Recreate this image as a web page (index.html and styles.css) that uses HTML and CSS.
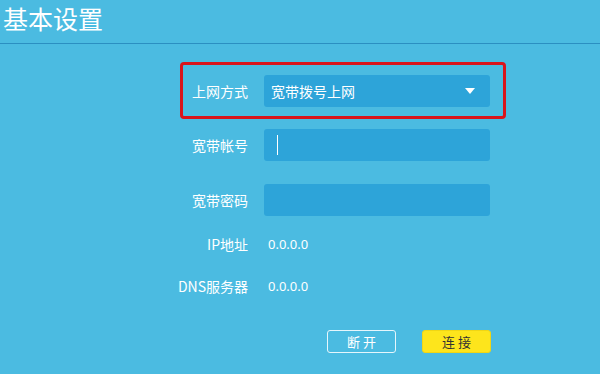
FILE: index.html
```html
<!DOCTYPE html>
<html lang="zh">
<head>
    <meta charset="UTF-8">
    <title>基本设置</title>
    <link rel="stylesheet" href="styles.css">
</head>
<body>
    <h1 class="title">基本设置</h1>

    <div class="form">
        <div class="row row-mode">
            <label class="label">上网方式</label>
            <div class="select">
                <span>宽带拨号上网</span>
                <span class="arrow"></span>
            </div>
        </div>
        <div class="row">
            <label class="label">宽带帐号</label>
            <div class="input"><span class="cursor"></span></div>
        </div>
        <div class="row row-last">
            <label class="label">宽带密码</label>
            <div class="input"></div>
        </div>
        <div class="row row-info">
            <label class="label">IP地址</label>
            <span class="value">0.0.0.0</span>
        </div>
        <div class="row row-info">
            <label class="label">DNS服务器</label>
            <span class="value">0.0.0.0</span>
        </div>
        <div class="buttons">
            <button class="btn btn-off">断 开</button>
            <button class="btn btn-on">连 接</button>
        </div>
    </div>
</body>
</html>
```

FILE: styles.css
```css
html, body {
    margin: 0;
    height: 100%;
}
body {
    background-color: #4bbbe1;
    font-family: "Noto Sans CJK SC", "Microsoft YaHei", sans-serif;
    color: #fff;
    overflow: hidden;
}
.title {
    margin: 0;
    padding: 2px 0 0 3px;
    height: 41px;
    font-size: 25px;
    font-weight: normal;
    line-height: 32px;
    border-bottom: 1px solid #2b8fc1;
}
.form {
    padding: 18px 0 0 164px;
}
.row {
    display: flex;
    align-items: center;
    height: 32px;
    margin-bottom: 23px;
}
.row-mode {
    width: 320px;
    height: 51px;
    margin-left: 16px;
    border: 3px solid #d9141c;
    border-radius: 4px;
    margin-bottom: 10px;
}
.label {
    flex-shrink: 0;
    width: 84px;
    text-align: right;
    font-size: 14px;
    margin-right: 16px;
    white-space: nowrap;
}
.row-mode .label {
    width: 65px;
}
.select, .input {
    width: 226px;
    height: 32px;
    background-color: #2da4d9;
    border-radius: 3px;
    box-sizing: border-box;
    display: flex;
    align-items: center;
}
.select {
    padding: 0 15px 0 7px;
    justify-content: space-between;
    font-size: 14px;
}
.arrow {
    width: 0;
    height: 0;
    border-left: 5px solid transparent;
    border-right: 5px solid transparent;
    border-top: 6px solid #fff;
}
.input {
    padding-left: 13px;
}
.cursor {
    width: 1px;
    height: 20px;
    background-color: #fff;
}
.row-last {
    margin-bottom: 18px;
}
.row-info {
    height: 20px;
    margin-bottom: 22px;
}
.value {
    font-size: 13px;
    margin-left: 4px;
    font-family: "Noto Sans", sans-serif;
}
.buttons {
    display: flex;
    gap: 26px;
    padding: 12px 0 0 163px;
}
.btn {
    width: 69px;
    height: 23px;
    border-radius: 3px;
    font-size: 13px;
    font-family: "Noto Sans CJK SC", sans-serif;
    padding: 0;
}
.btn-off {
    background: transparent;
    border: 1px solid #e6f6fc;
    color: #fff;
}
.btn-on {
    background-color: #fde51c;
    border: 1px solid #f0d614;
    color: #333;
}
```
